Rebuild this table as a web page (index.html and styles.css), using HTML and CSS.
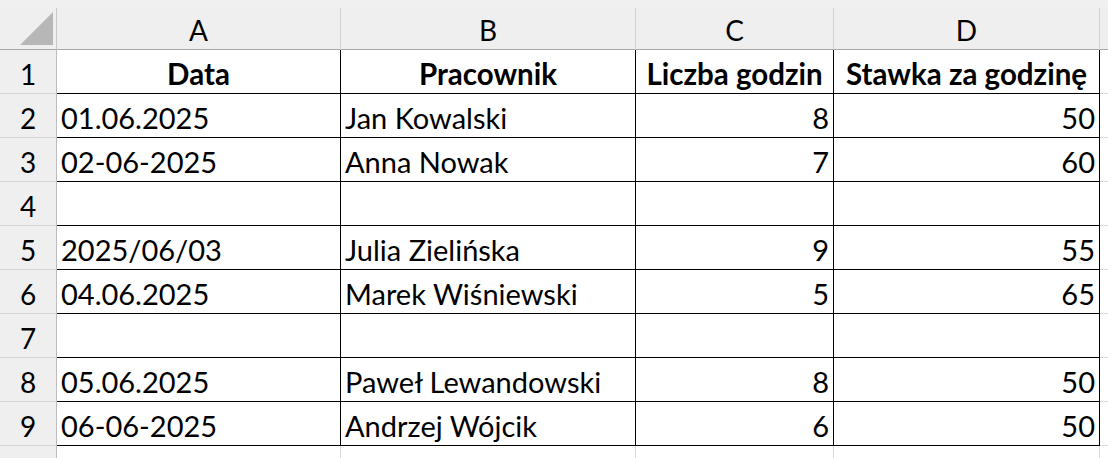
FILE: index.html
```html
<!DOCTYPE html>
<html lang="pl">
<head>
<meta charset="utf-8">
<title>Arkusz</title>
<link rel="stylesheet" href="styles.css">
</head>
<body>
<div class="sheet">
  <div class="topstrip"></div>
  <div class="grid">
    <div class="corner"><svg width="56" height="41" viewBox="0 0 56 41"><polygon points="53,4 53,37 20,37" fill="#b7b7b7"/></svg></div>
    <div class="colhead">A</div>
    <div class="colhead">B</div>
    <div class="colhead">C</div>
    <div class="colhead">D</div>
    <div class="colhead extra"></div>

    <div class="rowhead">1</div>
    <div class="cell bold center">Data</div>
    <div class="cell bold center">Pracownik</div>
    <div class="cell bold center">Liczba godzin</div>
    <div class="cell bold center">Stawka za godzinę</div>
    <div class="cell extra"></div>

    <div class="rowhead">2</div>
    <div class="cell">01.06.2025</div>
    <div class="cell">Jan Kowalski</div>
    <div class="cell right">8</div>
    <div class="cell right">50</div>
    <div class="cell extra"></div>

    <div class="rowhead">3</div>
    <div class="cell">02-06-2025</div>
    <div class="cell">Anna Nowak</div>
    <div class="cell right">7</div>
    <div class="cell right">60</div>
    <div class="cell extra"></div>

    <div class="rowhead">4</div>
    <div class="cell"></div>
    <div class="cell"></div>
    <div class="cell right"></div>
    <div class="cell right"></div>
    <div class="cell extra"></div>

    <div class="rowhead">5</div>
    <div class="cell">2025/06/03</div>
    <div class="cell">Julia Zielińska</div>
    <div class="cell right">9</div>
    <div class="cell right">55</div>
    <div class="cell extra"></div>

    <div class="rowhead">6</div>
    <div class="cell">04.06.2025</div>
    <div class="cell">Marek Wiśniewski</div>
    <div class="cell right">5</div>
    <div class="cell right">65</div>
    <div class="cell extra"></div>

    <div class="rowhead">7</div>
    <div class="cell"></div>
    <div class="cell"></div>
    <div class="cell right"></div>
    <div class="cell right"></div>
    <div class="cell extra"></div>

    <div class="rowhead">8</div>
    <div class="cell">05.06.2025</div>
    <div class="cell">Paweł Lewandowski</div>
    <div class="cell right">8</div>
    <div class="cell right">50</div>
    <div class="cell extra"></div>

    <div class="rowhead">9</div>
    <div class="cell">06-06-2025</div>
    <div class="cell">Andrzej Wójcik</div>
    <div class="cell right">6</div>
    <div class="cell right">50</div>
    <div class="cell extra"></div>

    <div class="rowhead"></div>
    <div class="cell empty"></div>
    <div class="cell empty"></div>
    <div class="cell empty"></div>
    <div class="cell empty"></div>
    <div class="cell extra"></div>
  </div>
</div>
</body>
</html>
```

FILE: styles.css
```css
* { box-sizing: border-box; }
html, body {
  margin: 0;
  padding: 0;
  background: #ffffff;
  overflow: hidden;
}
.sheet {
  width: 1108px;
  height: 458px;
  overflow: hidden;
  font-family: Lato, "Liberation Sans", sans-serif;
  color: #000;
}
.topstrip {
  height: 8px;
  background: #f0f0f0;
}
.grid {
  display: grid;
  grid-template-columns: 57px 284px 295px 198px 266px 8px;
  grid-template-rows: 42px repeat(9, 44px) 20px;
}
.corner {
  background: #efefef;
  border-right: 1px solid #c9c9c9;
  border-bottom: 1px solid #a9a9a9;
}
.corner svg { display: block; }
.colhead {
  background: #efefef;
  border-right: 1px solid #d2d2d2;
  border-bottom: 1px solid #a9a9a9;
  font-size: 28px;
  line-height: 1;
  display: flex;
  align-items: center;
  justify-content: center;
  padding-top: 3px;
}
.rowhead {
  background: #efefef;
  border-right: 1px solid #bdbdbd;
  border-bottom: 1px solid #d4d4d4;
  font-size: 28px;
  line-height: 1;
  display: flex;
  align-items: center;
  justify-content: center;
  padding-top: 4px;
}
.cell {
  border-right: 1px solid #000;
  border-bottom: 1px solid #000;
  font-size: 29px;
  line-height: 1;
  display: flex;
  align-items: center;
  padding: 4px 4px 0 4px;
  white-space: nowrap;
}
.cell.bold { font-weight: 700; font-size: 29.5px; }
.cell.center { justify-content: center; }
.cell.right { justify-content: flex-end; }
.cell.extra {
  border-right: none;
  border-bottom: 1px solid #dadada;
}
.cell.empty {
  border-bottom: none;
  border-right: 1px solid #dadada;
}
.colhead.extra { border-right: none; }
```
